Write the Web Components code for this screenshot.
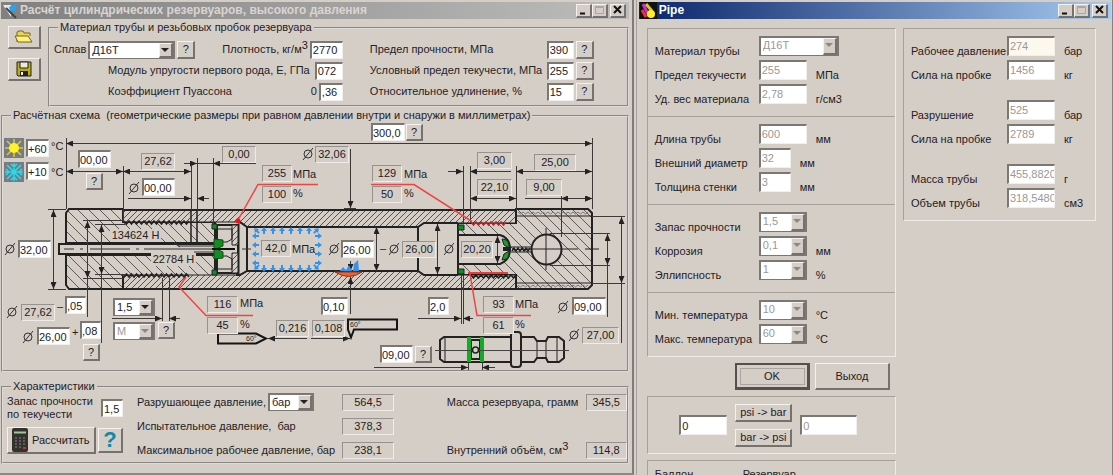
<!DOCTYPE html>
<html lang="ru">
<head>
<meta charset="utf-8">
<title>Расчёт цилиндрических резервуаров</title>
<style>
  html { height: 100%; }
  body { margin: 0; height: 100%; overflow: hidden; display: flex; gap: 2px;
    background: #d5cec7; color: #24211f; font: 11px/13px "Liberation Sans", Arial, sans-serif; }
  reservoir-window { flex: 634 1 0; }
  pipe-window { flex: 477 1 0; }
</style>
</head>
<body>
<reservoir-window></reservoir-window>
<pipe-window></pipe-window>

<script>
const controls = `
  *, *::before, *::after { box-sizing: border-box; }
  input, select, button, output { font: inherit; color: inherit; margin: 0; border-radius: 0; flex: none; }
  input, select { appearance: none; background: #fff; border: solid; border-width: 2px 1px 1px 2px;
    border-color: #7b7773 #f1eeeb #f1eeeb #7b7773; padding: 0 0 0 1px; height: 18px; outline: 0; }
  input:disabled, select:disabled { color: #9b9896; opacity: 1; background: #fff; }
  output { display: block; height: 17px; line-height: 15px; text-align: center; background: #d5cec7;
    border: 1px solid; border-color: #97928d #efebe7 #efebe7 #97928d; }
  button { padding: 0; background: #d5cec7; border: solid; border-width: 1px 2px 2px 1px;
    border-color: #f4f1ee #75716d #75716d #f4f1ee; display: grid; place-items: center; text-align: center; }
  button.q { width: 18px; height: 18px; }
  .combo { position: relative; display: inline-flex; flex: none; }
  .combo select { width: 100%; border-right-width: 2px; border-right-color: #7b7773; border-bottom-color: #7b7773; padding-left: 2px; }
  .combo::before { content: ""; position: absolute; z-index: 1; pointer-events: none; right: 2px; top: 2px; bottom: 1px; width: 14px;
    background: #d5cec7; border: solid; border-width: 1px 2px 2px 1px; border-color: #f4f1ee #75716d #75716d #f4f1ee; }
  .combo::after { content: ""; position: absolute; z-index: 2; pointer-events: none; right: 6px; top: 7px;
    border: 4px solid transparent; border-top-color: #222; border-bottom: 0; }
  .combo.off::after { border-top-color: #8b8783; }
  sup { font-size: 11px; line-height: 0; vertical-align: 4px; }
`;
const define = (name, css, html, setup) => {
  const tpl = document.createElement('template');
  tpl.innerHTML = `<style>${controls}${css}</style>${html}`;
  customElements.define(name, class extends HTMLElement {
    constructor() {
      super();
      this.attachShadow({ mode: 'open' }).append(tpl.content.cloneNode(true));
    }
    connectedCallback() { if (setup) setup(this, this.shadowRoot); }
  });
};

/* Caption bar with window buttons */
define('title-bar', `
  :host { display: flex; align-items: center; height: 17px; gap: 2px; padding: 0 3px 0 1px;
    color: #d9d5d0; font-weight: bold; font-size: 12px; background: linear-gradient(90deg, #808080, #bdbdbc); }
  :host([active]) { color: #fff; background: linear-gradient(90deg, #0a246a, #a6caf0); }
  .t { flex: 1; white-space: nowrap; overflow: hidden; }
  .b { display: flex; }
  button { width: 16px; height: 14px; }
  button + button + button { margin-left: 2px; }
  svg { display: block; }
`, `<slot name="icon"></slot><span class="t"><slot></slot></span>
  <span class="b">
    <button aria-label="Свернуть"><svg width="11" height="10"><path d="M2 8.5h5" stroke="#111" stroke-width="2"/></svg></button>
    <button aria-label="Развернуть" disabled><svg width="11" height="10"><path d="M1.5 1.5h8v7h-8zM1 2.500h9" fill="none" stroke="#aaa6a1"/></svg></button>
    <button aria-label="Закрыть"><svg width="11" height="10"><path d="M2 1l7 7M9 1l-7 7" stroke="#111" stroke-width="2"/></svg></button>
  </span>`);

/* Etched frame with a caption */
define('group-box', `
  :host { display: block; }
  fieldset { margin: 0; padding: 0; min-width: 0; border: 2px groove #dedad5; }
  legend { margin-left: 8px; padding: 0 2px; white-space: nowrap; }
`, `<fieldset><legend><slot name="legend"></slot></legend><slot></slot></fieldset>`);

define('material-panel', `
  :host { display: flex; justify-content: space-between; gap: 27px; padding: 5px 33px 3px 4px; }
  .c { display: flex; flex-direction: column; }
  .l { width: 289px; } .r { width: 224px; }
  .row { display: flex; align-items: center; height: 21px; gap: 2px; white-space: nowrap; }
  .sub { padding-left: 54px; }
  .push { margin-left: auto; }
`, `<div class="c l">
    <div class="row"><label for="a">Сплав</label><span class="combo" style="width:87px"><select id="a"><option>Д16Т</option></select></span><button class="q">?</button>
      <label class="push" for="b">Плотность, кг/м<sup>3</sup></label><input id="b" style="width:33px" value="2770"></div>
    <div class="row sub"><label for="c">Модуль упругости первого рода, E, ГПа</label><input class="push" id="c" style="width:28px" value="072"></div>
    <div class="row sub"><label for="d">Коэффициент Пуассона</label><span class="push">0</span><input id="d" style="width:24px" value=",36"></div>
  </div>
  <div class="c r">
    <div class="row"><label for="e">Предел прочности, МПа</label><input class="push" id="e" style="width:27px" value="390"><button class="q">?</button></div>
    <div class="row"><label for="f">Условный предел текучести, МПа</label><input class="push" id="f" style="width:27px" value="255"><button class="q">?</button></div>
    <div class="row"><label for="g">Относительное удлинение, %</label><input class="push" id="g" style="width:27px" value="15"><button class="q">?</button></div>
  </div>`);

/* Drawing of the reservoir. Items: kind, x, y, width, text, accessible name */
const items = [
  ['in', 370, 123, 34, '300,0', 'Общая длина'], ['q', 405, 124, 17],
  ['in', 25, 139, 23, '+60', 'Максимальная температура'], ['t', 50, 140, 0, '°C'],
  ['in', 25, 162, 23, '+10', 'Минимальная температура'], ['t', 50, 166, 0, '°C'],
  ['in', 77, 150, 33, '00,00', 'Длина буртика'], ['q', 85, 173, 17],
  ['out', 140, 153, 34, '27,62'], ['out', 221, 146, 34, '0,00'],
  ['in', 141, 178, 33, '00,00', 'Диаметр проточки'], ['out', 314, 146, 34, '32,06'],
  ['out', 261, 165, 30, '255'], ['t', 292, 168, 0, 'МПа'], ['out', 261, 186, 30, '100'], ['t', 292, 187, 0, '%'],
  ['out', 371, 165, 30, '129'], ['t', 403, 168, 0, 'МПа'], ['out', 371, 186, 30, '50'], ['t', 403, 187, 0, '%'],
  ['out', 476, 152, 35, '3,00'], ['out', 476, 179, 35, '22,10'], ['out', 533, 154, 42, '25,00'], ['out', 525, 179, 36, '9,00'],
  ['in', 17, 240, 33, '32,00', 'Наружный диаметр'],
  ['flat', 109, 229, 51, '134624 Н'], ['flat', 150, 253, 45, '22784 Н'],
  ['out', 260, 240, 30, '42,0'], ['t', 291, 243, 0, 'МПа'],
  ['in', 340, 240, 33, '26,00', 'Внутренний диаметр'], ['t', 379, 242, 0, '–'], ['out', 401, 241, 34, '26,00'],
  ['out', 460, 241, 32, '20,20'],
  ['out', 20, 304, 34, '27,62'], ['t', 56, 300, 0, '–'], ['in', 64, 296, 21, ',05', 'Нижний допуск'],
  ['in', 36, 327, 33, '26,00', 'Диаметр расточки'], ['t', 71, 326, 0, '+'], ['in', 79, 321, 21, ',08', 'Верхний допуск'], ['q', 82, 344, 17],
  ['sel', 112, 298, 42, '1,5', 'Шаг резьбы'], ['off', 112, 322, 42, 'М', 'Тип резьбы'], ['q', 157, 322, 17],
  ['out', 206, 296, 31, '116'], ['t', 239, 297, 0, 'МПа'], ['out', 206, 317, 31, '45'], ['t', 239, 318, 0, '%'],
  ['out', 275, 320, 33, '0,216'], ['out', 311, 320, 33, '0,108'], ['in', 320, 297, 27, '0,10', 'Глубина дефекта'],
  ['in', 427, 297, 21, '2,0', 'Ширина канавки'],
  ['out', 482, 296, 31, '93'], ['t', 514, 298, 0, 'МПа'], ['out', 482, 317, 31, '61'], ['t', 514, 318, 0, '%'],
  ['in', 571, 297, 34, '09,00', 'Диаметр отверстия'], ['out', 581, 327, 37, '27,00'],
  ['in', 379, 345, 33, '09,00', 'Расстояние между кольцами'], ['q', 414, 346, 17]
];
const tag = ([k, x, y, w, t, n]) => {
  const s = `left:${x}px;top:${y - 122}px;` + (w ? `width:${w}px` : '');
  if (k === 'in') return `<input style="${s}" value="${t}" aria-label="${n}">`;
  if (k === 'q') return `<button class="q" style="${s}">?</button>`;
  if (k === 'out') return `<output style="${s}">${t}</output>`;
  if (k === 'sel' || k === 'off') return `<span class="combo ${k}" style="${s}"><select aria-label="${n}" ${k === 'off' ? 'disabled' : ''}><option>${t}</option></select></span>`;
  return `<span class="${k}" style="${s}">${t}</span>`;
};
const threads = (x1, x2, y, d) => {
  let p = `M${x1} ${y}`;
  for (let x = x1; x < x2 - 2; x += 5) p += `l2.500 ${d}l2.500 ${-d}`;
  return p;
};
const jets = () => {
  let s = '';
  const a = (x, y, r) => { s += `<path transform="translate(${x} ${y}) rotate(${r})" d="M0 -4l3 4h-2v3h-2v-3h-2z"/>`; };
  for (let i = 0; i < 6; i++) { a(264 + i * 9, 231, 0); a(264 + i * 9, 268, 180); }
  for (let i = 0; i < 4; i++) { a(256, 236 + i * 9, -90); a(318, 236 + i * 9, 90); }
  a(257, 231, -45); a(316, 231, 45); a(257, 267, -135); a(316, 267, 135);
  return s;
};
const dia = [[134, 188], [308, 154], [10, 249], [334, 249], [394, 249], [449, 249], [12, 312], [28, 337], [563, 307], [574, 335]]
  .map(([x, y]) => `<circle cx="${x}" cy="${y}" r="4"/><path d="M${x - 5} ${y + 6}L${x + 5} ${y - 6}"/>`).join('');

define('scheme-canvas', `
  :host { display: block; position: relative; width: 628px; height: 248px; margin: 0 auto; }
  .art { position: absolute; inset: 0 auto auto -1px; display: block; }
  .items { position: absolute; inset: 0 auto auto -2px; }
  .items > * { position: absolute; white-space: nowrap; }
  .items > .combo { display: flex; }
  .items > .q { height: 17px; }
  .items > input { padding-left: 0; }
  .flat { background: #d5cec7; text-align: center; }
`, `<svg class="art" width="629" height="248" viewBox="2 122 629 248" fill="none" stroke="#222" aria-hidden="true">
  <defs>
    <pattern id="wide" width="11" height="11" patternUnits="userSpaceOnUse"><rect width="11" height="11" fill="#d5cec7" stroke="none"/><path d="M-1 -1L12 12M-1 10L1 12M10 -1L12 1" stroke="#5d5956"/></pattern>
    <pattern id="fine" width="6" height="6" patternUnits="userSpaceOnUse"><rect width="6" height="6" fill="#d5cec7" stroke="none"/><path d="M-1 7L7 -1M-1 1L1 -1M5 7L7 5" stroke="#55514e"/></pattern>
    <marker id="m" viewBox="0 0 7 6" refX="7" refY="3" markerWidth="7" markerHeight="6" orient="auto-start-reverse"><path d="M0 0L7 3L0 6z" fill="#222" stroke="none"/></marker>
  </defs>
  <!-- temperature icons -->
  <g stroke="none"><rect x="4" y="138" width="20" height="20" fill="#777b85"/><rect x="4" y="162" width="20" height="20" fill="#777b85"/></g>
  <path d="M14 139v18M5 148h18M7 141l14 14M21 141L7 155" stroke="#d8cf2d" stroke-width="1.500"/><circle cx="14" cy="148" r="5" fill="#fff22a" stroke="none"/>
  <path d="M14 163v18M5 172h18M7 165l14 14M21 165L7 179M11 164l3 3 3-3M11 180l3-3 3 3M6 169l3 3-3 3M22 169l-3 3 3 3" stroke="#1fe0ec" stroke-width="1.500"/>
  <!-- plugs and tube walls -->
  <path d="M66 213l3-4h54v13h92v21H66zM66 255h149v21h-92v13H69l-3-4z" fill="url(#wide)" stroke-width="2"/>
  <path d="M458 223h58v-14h72l4 4v72l-4 4h-72v-14h-58z" fill="url(#wide)" stroke-width="2"/>
  <path d="M123 210h393v13h-92l-6 4H247l-8-5H123z" fill="url(#fine)"/>
  <path d="M123 289h393v-14h-92l-6-4H247l-8 4H123z" fill="url(#fine)"/>
  <path d="M123 210h393M123 289h393M123 210v13M123 276v13M516 210v13M516 275v14" stroke-width="2"/>
  <path d="M236 222h4l7 5h171l6-4h34M236 275h4l7-4h171l6 4h34" stroke-width="2"/>
  <path d="M247 227v44M418 227v44" stroke-width="2"/><path d="M239 222v53"/>
  <path d="M516 216h75M516 283h75"/><path d="${threads(518, 590, 212, 2)}${threads(518, 590, 285, 2)}" stroke="#777"/>
  <path d="${threads(124, 190, 221, 3)}${threads(124, 190, 277, -3)}" stroke-width="1.500"/>
  <path d="M191 210v34M197 210v34" stroke-width="1.500"/>
  <rect x="59" y="244" width="157" height="10" fill="#d5cec7" stroke-width="2"/>
  <path d="M64 249h10M80 249h3M90 249h40M136 249h3M144 249h70M178 246h38M174 243l6 4M194 252h22M242 249h9" stroke="#333"/>
  <!-- valve seat -->
  <rect x="217" y="225" width="21" height="48" fill="#d5cec7" stroke-width="2"/><path d="M232 225h6v20h-6zM232 253h6v20h-6z" fill="url(#fine)"/>
  <path d="M217 229h15v10l-5 3h-10M217 269h15v-10l-5-3h-10"/>
  <path d="M214 239l9 1v6l-7 3 7 3v6l-9 1z" fill="#138d23" stroke="#0a5512"/><path d="M212 249h23" stroke="#111" stroke-width="2"/>
  <path d="M212 224h5v5h-5zM212 270h5v5h-5zM458 225h6v5h-6zM458 269h6v5h-6z" fill="#0c8f22" stroke-width="1"/>
  <!-- right plug cavity and hole -->
  <path d="M458 235h42q10 3 10 14t-10 15h-42z" fill="#d5cec7" stroke-width="2"/>
  <path d="M502 239q8 0 7 9l-5-3zM502 260q8 0 7-9l-5 3z" fill="#179b29"/><path d="M503 249h8" stroke-width="4"/>
  <path d="M511 247h20M511 252h20"/><path d="M512 251l2-3 2 3 2-3 2 3 2-3 2 3 2-3 2 3 2-3" stroke-width="1.500"/>
  <circle cx="546.500" cy="249.500" r="15" fill="#d5cec7" stroke-width="2"/><path d="M546 228v42M526 249h52M585 249h14"/>
  <path d="${threads(471, 507, 222, 3)}" stroke="#b8242a" stroke-width="1.500"/><path d="${threads(471, 515, 275, 3)}" stroke-width="1.500"/>
  <path d="M468 273h40" stroke="#f03a3a" stroke-width="2"/>
  <!-- extension lines -->
  <g stroke="#3c3937"><path d="M66.500 138v71M592.500 138v71M123.500 166v56M191.500 166v44M197.500 158v52M213.500 158v66M463.500 166v57M470.500 166v57M516.500 166v44M561.500 195v42"/>
  <path d="M48 209.500h18M48 289.500h18M83 220.500h40M83 278.500h40M95 224.500h30M95 274.500h30M162.500 278v43M169.500 278v43M87.500 278v39M101.500 273v70M592 216.500h33M592 283.500h33M550 233.500h60M550 265.500h60M607.500 265v52M621.500 283v60M461.500 275v49M463.500 275v49M468.500 359v11M482.500 359v11M344 208.500h12M344 271.500h12M197 163.500h16"/></g>
  <!-- dimension arrows -->
  <g stroke="#3c3937" marker-end="url(#m)"><path d="M256 163.500h-43"/><path d="M184 163.500h13"/><path d="M128 198.500h63"/><path d="M209 198.500h-12"/>
  <path d="M448 171.500h15"/><path d="M511 171.500h-41"/><path d="M525 198.500h67"/><path d="M112 318.500h50"/><path d="M180 318.500h-11"/><path d="M418 318.500h43"/><path d="M473 318.500h-10"/>
  <path d="M374 367.500h94"/><path d="M495 367.500h-13"/><path d="M350.500 149v59"/><path d="M350.500 261v10"/><path d="M350.500 314v-37"/><path d="M307 338.500h-39"/><path d="M311 338.500h39"/></g>
  <g stroke="#3c3937" marker-start="url(#m)" marker-end="url(#m)"><path d="M66 143.500h526"/><path d="M66 171.500h57"/><path d="M123 171.500h68"/><path d="M470 198.500h46"/><path d="M516 171.500h76"/><path d="M561 198.500h31"/>
  <path d="M53.500 210v79"/><path d="M87.500 221v57"/><path d="M101.500 225v49"/><path d="M376.500 227v44"/><path d="M437.500 224v50"/><path d="M497.500 236v27"/><path d="M607.500 234v31"/><path d="M621.500 217v66"/></g>
  <!-- stress leaders -->
  <path d="M238 220l20-35.500h60M371 184.500h43l58 37M186 277l-7 10 27 28.500h47M470 274l7 41.500h54" stroke="#f04444" stroke-width="1.500"/><circle cx="238" cy="221" r="2.500" fill="#f01616" stroke="none"/>
  <g fill="#3292ef" stroke="none">${jets()}<path d="M340 271l3-4 3 3 3-5 3 6zM353 271l1-7 4-4 1 11z"/></g>
  <path d="M335 272h27q-13 9-27 0z" fill="#f0642c" stroke="#8d3518"/>
  <!-- cutters -->
  <path d="M218 333.500h38l10 5-10 5h-38zM348 319.500h49v10h-43l-3 8-3-8z" fill="#d5cec7" stroke="#151515" stroke-width="2"/>
  <g fill="#222" stroke="none" font-size="7"><text x="246" y="341">60°</text><text x="350" y="327">60°</text></g>
  <!-- filling probe -->
  <g fill="#d5cec7" stroke-width="2"><path d="M444 337h68v25h-68l-4-3v-19zM521 337h13l3 4h9l2-4h11l5 4v17l-5 4h-11l-2-4h-9l-3 4h-13zM471 340h9v19h-9z"/><rect x="511" y="332" width="10" height="35" rx="3"/></g>
  <path d="M445 337v25M537 341v17M546 341v17M557 337v25"/><path d="M469 337v25M482 337v25" stroke="#0fae22" stroke-width="4"/>
  <circle cx="475.500" cy="350" r="3" stroke-width="1.500"/><path d="M435 350.500h37M479 350.500h90" stroke="#444"/>
  <g stroke="#333" stroke-width="1">${dia}</g>
</svg><div class="items">${items.map(tag).join('')}</div>`);

define('results-panel', `
  :host { display: flex; padding: 0 0 3px 4px; white-space: nowrap; }
  .a { width: 116px; display: flex; flex-direction: column; gap: 6px; padding-top: 2px; }
  .a > div { display: flex; gap: 2px; align-items: center; justify-content: space-between; }
  .b, .c { display: grid; grid-template-rows: repeat(3, 18px); row-gap: 6px; align-items: center; }
  .b { width: 257px; margin: 0 auto 0 14px; } .c { width: 180px; }
  .b > div, .c > div { display: flex; align-items: center; gap: 2px; }
  output { margin-left: auto; }
  .b output { width: 52px; } .c output { width: 41px; }
  .calc { width: 89px; height: 27px; display: flex; align-items: center; gap: 4px; padding-left: 4px; }
  .help { width: 25px; height: 25px; color: #1287a6; font: bold 22px/20px "Liberation Sans", sans-serif; }
`, `<div class="a"><div><label for="k">Запас прочности<br>по текучести</label><input id="k" style="width:22px" value="1,5"></div>
    <div><button class="calc"><svg width="16" height="24" aria-hidden="true"><rect width="16" height="24" rx="2" fill="#34312f"/><path d="M2 4.500h12" stroke="#9c9" stroke-width="2"/><path d="M3 10h10M3 13h10M3 16h10M3 19h8" stroke="#8a8784" stroke-dasharray="2 2"/><path d="M11 20h3" stroke="#e22" stroke-width="2"/></svg>Рассчитать</button><button class="help" aria-label="Справка">?</button></div></div>
  <div class="b"><div><label for="u">Разрушающее давление,</label><span class="combo" style="width:46px"><select id="u"><option>бар</option></select></span><output>564,5</output></div>
    <div>Испытательное давление,&nbsp; бар<output>378,3</output></div>
    <div>Максимальное рабочее давление, бар<output>238,1</output></div></div>
  <div class="c"><div>Масса резервуара, грамм<output>345,5</output></div><div></div>
    <div><span>Внутренний объём, см<sup>3</sup></span><output>114,8</output></div></div>`);

define('reservoir-window', `
  :host { display: flex; flex-direction: column; min-width: 0; padding: 2px 3px 0 1px; border-right: 2px solid #7f7c79; border-bottom: 2px solid #8a8784; }
  .top { display: flex; gap: 7px; padding-top: 2px; }
  .tools { display: flex; flex-direction: column; gap: 9px; padding: 5px 0 0 7px; }
  .tools button { width: 33px; height: 23px; }
  .grow { flex: 1; min-width: 0; }
  .scheme { margin-top: 2px; } .results { margin-top: 8px; }
`, `<title-bar><svg slot="icon" width="16" height="16" aria-hidden="true"><path d="M1 2h8v12z" fill="#e9e9e6"/><path d="M7 4l6-3 2 3-3 5-4-1z" fill="#29a4e8"/><path d="M4 5l10 10" stroke="#444" stroke-width="2"/></svg>Расчёт цилиндрических резервуаров, высокого давления</title-bar>
  <div class="top">
    <div class="tools">
      <button aria-label="Открыть"><svg width="20" height="16"><path d="M3 13V3l2-1h4l1 2h6v3" fill="#e8d45a" stroke="#77651a"/><path d="M1 7h13l4 6H4z" fill="#fff27a" stroke="#77651a"/></svg></button>
      <button aria-label="Сохранить"><svg width="16" height="16"><path d="M1 1h14v14H2l-1-1z" fill="#b8ae12" stroke="#222"/><path d="M4 1h8v6H4z" fill="#ebe8e4" stroke="#222"/><path d="M4 10h8v5H4z" fill="#222"/><path d="M5 11h2v3H5z" fill="#eee"/></svg></button>
    </div>
    <group-box class="grow"><span slot="legend">Материал трубы и резьбовых пробок резервуара</span><material-panel></material-panel></group-box>
  </div>
  <group-box class="scheme"><span slot="legend">Расчётная схема&nbsp; (геометрические размеры при равном давлении внутри и снаружи в миллиметрах)</span><scheme-canvas></scheme-canvas></group-box>
  <group-box class="results"><span slot="legend">Характеристики</span><results-panel></results-panel></group-box>`);

/* Row of the Pipe dialog: label, text box or drop-down, unit */
define('pipe-row', `
  :host { display: grid; grid-template-columns: var(--label, 104px) auto 1fr; height: 24px; white-space: nowrap; }
  label, .u { padding-top: 9px; line-height: 12px; }
  .u { padding-left: 9px; }
  .field { display: flex; align-items: flex-start; }
  .combo, input, select { height: 20px; }
  input, select { padding-bottom: 2px; }
  :host([tint]) input { background: #fdf8ee; }
`, `<label for="f"></label><span class="field"></span><span class="u"></span>`, (el, root) => {
  const w = el.getAttribute('width') || 48, v = el.getAttribute('value');
  root.querySelector('label').textContent = el.getAttribute('label');
  root.querySelector('.u').textContent = el.getAttribute('unit') || '';
  root.querySelector('.field').innerHTML = el.hasAttribute('list')
    ? `<span class="combo off" style="width:${w}px"><select id="f" disabled><option>${v}</option></select></span>`
    : `<input id="f" style="width:${w}px" disabled value="${v}">`;
});

define('pipe-window', `
  :host { display: flex; flex-direction: column; min-width: 0; overflow: hidden; padding: 2px 1px 0 2px; border-left: 1px solid #a7a29d; border-right: 1px solid #86827e; }
  .body { display: grid; grid-template-columns: minmax(0, 249fr) minmax(0, 193fr); column-gap: 7px; align-items: start; padding: 9px 15px 0 8px; }
  .box { border: 1px solid; border-color: #a5a09a #efebe7 #efebe7 #a5a09a; }
  .sec { padding: 7px 0 8px 7px; }
  .sec + .sec { border-top: 1px solid #a5a09a; }
  .right { --label: 96px; padding: 7px 0 8px 7px; display: grid; row-gap: 16px; }
  .ok { display: flex; justify-content: flex-end; gap: 5px; padding: 6px 6px 6px 0; }
  .ok button { width: 75px; height: 27px; }
  .ok .main { border: 2px solid #55504e; border-right-width: 3px; border-bottom-width: 3px; outline: 1px solid #aaa5a0; outline-offset: -6px; }
  .conv { display: flex; justify-content: center; align-items: center; gap: 8px; height: 58px; padding-right: 6px; }
  .conv div { display: grid; gap: 7px; }
  .conv button { width: 57px; height: 18px; }
  .conv input { height: 20px; }
  .last { display: flex; margin-top: 6px; padding: 7px; height: 120px; }
  .last span { width: 88px; }
`, `<title-bar active><svg slot="icon" width="17" height="17" aria-hidden="true"><rect width="17" height="17" fill="#111"/><path d="M3 2l6 12" stroke="#c92fd0" stroke-width="3"/><path d="M2 8l4 7" stroke="#e33" stroke-width="3"/><path d="M6 2l6 7" stroke="#d8c914" stroke-width="3"/><circle cx="11" cy="12" r="4" fill="#fff11c"/></svg>Pipe</title-bar>
  <div class="body">
    <div class="left">
      <div class="box">
        <div class="sec"><pipe-row label="Материал трубы" value="Д16Т" width="80" list></pipe-row><pipe-row label="Предел текучести" value="255" unit="МПа"></pipe-row><pipe-row label="Уд. вес материала" value="2,78" unit="г/см3"></pipe-row></div>
        <div class="sec"><pipe-row label="Длина трубы" value="600" unit="мм"></pipe-row><pipe-row label="Внешний диаметр" value="32" width="32" unit="мм"></pipe-row><pipe-row label="Толщина стенки" value="3" width="32" unit="мм"></pipe-row></div>
        <div class="sec"><pipe-row label="Запас прочности" value="1,5" list></pipe-row><pipe-row label="Коррозия" value="0,1" unit="мм" list></pipe-row><pipe-row label="Эллипсность" value="1" unit="%" list></pipe-row></div>
        <div class="sec"><pipe-row label="Мин. температура" value="10" unit="°C" list></pipe-row><pipe-row label="Макс. температура" value="60" unit="°C" list></pipe-row></div>
      </div>
      <div class="ok"><button class="main">OK</button><button>Выход</button></div>
      <div class="box conv"><input style="width:48px" value="0" aria-label="psi"><div><button>psi -&gt; bar</button><button>bar -&gt; psi</button></div><input style="width:57px" value="0" disabled aria-label="bar"></div>
      <div class="box last"><span>Баллон</span><span>Резервуар</span></div>
    </div>
    <div class="right box">
      <div><pipe-row label="Рабочее давление" value="274" unit="бар" tint></pipe-row><pipe-row label="Сила на пробке" value="1456" unit="кг"></pipe-row></div>
      <div><pipe-row label="Разрушение" value="525" unit="бар"></pipe-row><pipe-row label="Сила на пробке" value="2789" unit="кг"></pipe-row></div>
      <div><pipe-row label="Масса трубы" value="455,8820" unit="г"></pipe-row><pipe-row label="Объем трубы" value="318,5480" unit="см3"></pipe-row></div>
    </div>
  </div>`);
</script>
</body>
</html>
